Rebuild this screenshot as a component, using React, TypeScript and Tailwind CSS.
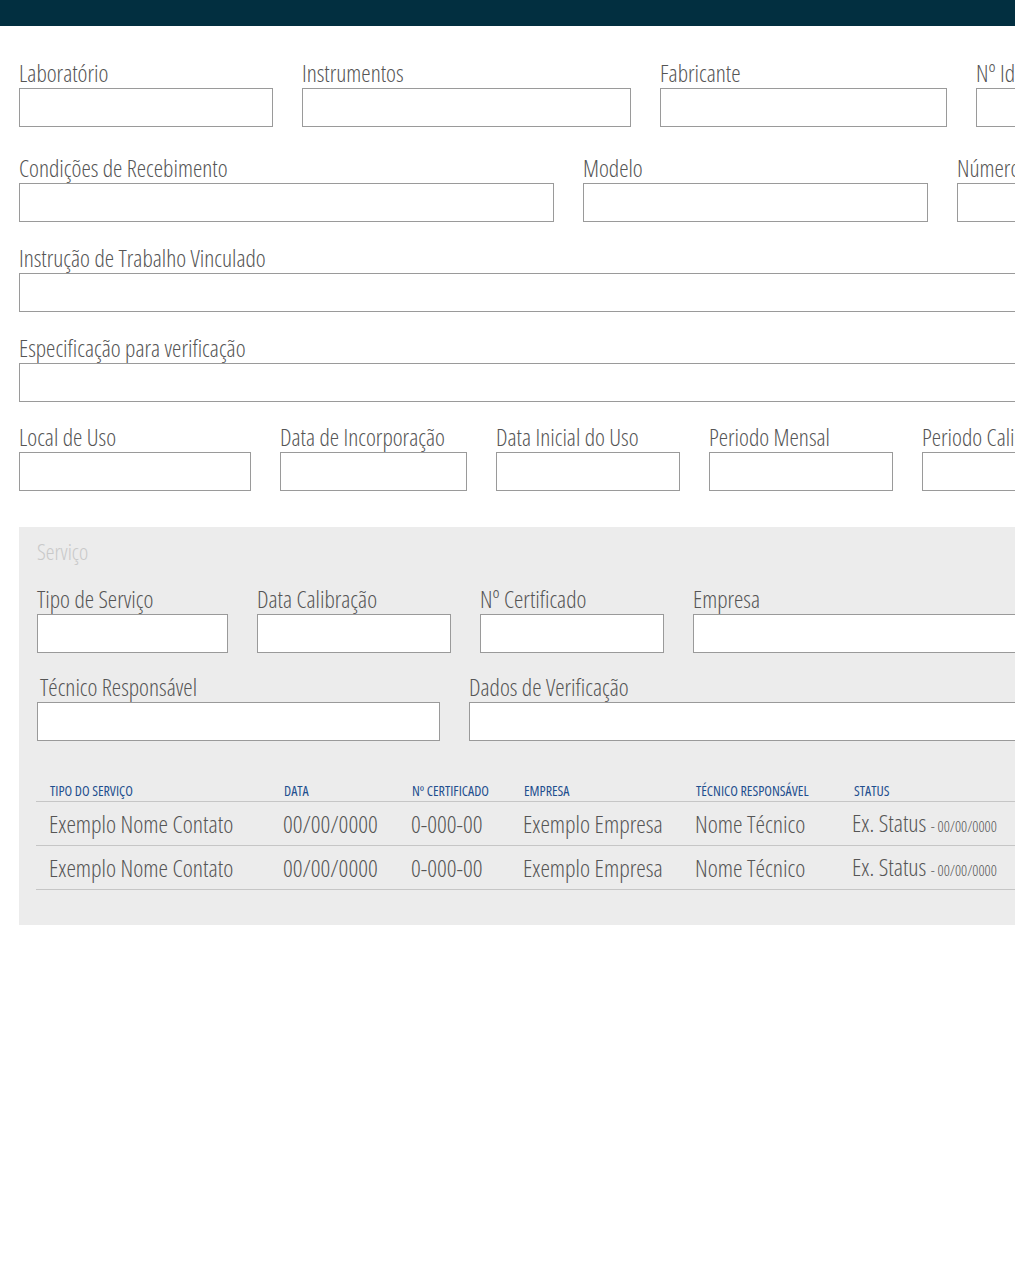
import React from 'react';

const font = "font-['Open_Sans','Liberation_Sans',sans-serif] font-light font-stretch-condensed";

function Field({ label, width, className = '' }: { label: string; width: string; className?: string }) {
  return (
    <div className={`flex flex-col ${width} ${className}`}>
      <label className="h-[28px] text-[23.6px] leading-[27px] text-[#555] whitespace-nowrap">{label}</label>
      <input className="h-[39px] w-full border border-[#9a9a9a] bg-white outline-none" />
    </div>
  );
}

const rows = [
  ['Exemplo Nome Contato', '00/00/0000', '0-000-00', 'Exemplo Empresa', 'Nome Técnico'],
  ['Exemplo Nome Contato', '00/00/0000', '0-000-00', 'Exemplo Empresa', 'Nome Técnico'],
];

export default function App() {
  return (
    <div className={`w-[1015px] h-[1264px] overflow-hidden bg-white ${font}`}>
      <div className="h-[26px] w-full bg-[#022f40]" />
      <div className="w-[1320px] pl-[19px] pt-[34px]">
        {/* Identificação */}
        <div className="flex gap-[29px]">
          <Field label="Laboratório" width="w-[254px]" />
          <Field label="Instrumentos" width="w-[329px]" />
          <Field label="Fabricante" width="w-[287px]" />
          <Field label="Nº Identificação" width="w-[260px]" />
        </div>
        <div className="mt-[28px] flex gap-[29px]">
          <Field label="Condições de Recebimento" width="w-[535px]" />
          <Field label="Modelo" width="w-[345px]" />
          <Field label="Número de Série" width="w-[300px]" />
        </div>
        <div className="mt-[23px] flex">
          <Field label="Instrução de Trabalho Vinculado" width="w-[1240px]" />
        </div>
        <div className="mt-[23px] flex">
          <Field label="Especificação para verificação" width="w-[1240px]" />
        </div>
        <div className="mt-[22px] flex gap-[29px]">
          <Field label="Local de Uso" width="w-[232px]" />
          <Field label="Data de Incorporação" width="w-[187px]" />
          <Field label="Data Inicial do Uso" width="w-[184px]" />
          <Field label="Periodo Mensal" width="w-[184px]" />
          <Field label="Periodo Calibração" width="w-[184px]" />
        </div>

        {/* Serviço */}
        <div className="mt-[36px] w-[1240px] bg-[#ececec] pl-[18px] pr-[18px] pt-[10px] pb-[35px]">
          <div className="h-[28px] text-[22px] leading-[28px] text-[#c9c9c9]">Serviço</div>
          <div className="mt-[21px] flex gap-[29px]">
            <Field label="Tipo de Serviço" width="w-[191px]" />
            <Field label="Data Calibração" width="w-[194px]" />
            <Field label="Nº Certificado" width="w-[184px]" />
            <Field label="Empresa" width="w-[500px]" />
          </div>
          <div className="mt-[21px] flex gap-[29px]">
            <Field label="Técnico Responsável" width="w-[403px]" className="[&>label]:pl-[3px]" />
            <Field label="Dados de Verificação" width="w-[700px]" />
          </div>

          <table className="mt-[35px] -ml-px w-full border-collapse text-left">
            <thead>
              <tr className="border-b border-[#c6c6c6]">
                {['Tipo do Serviço', 'Data', 'Nº Certificado', 'Empresa', 'Técnico Responsável', 'Status'].map((h, i) => (
                  <th
                    key={h}
                    className={`h-[25px] pl-[14px] pb-[2px] align-bottom text-[14px] font-normal uppercase leading-[16px] text-[#1f4f8f] ${
                      ['w-[234px]', 'w-[128px]', 'w-[112px]', 'w-[172px]', 'w-[158px]', ''][i]
                    }`}
                  >
                    {h}
                  </th>
                ))}
              </tr>
            </thead>
            <tbody>
              {rows.map((r, idx) => (
                <tr key={idx} className="h-[44px] border-b border-[#c6c6c6] text-[24px] text-[#555]">
                  {r.map((c, j) => (
                    <td key={j} className="pl-[13px] pt-[2px] leading-[28px] whitespace-nowrap">
                      {c}
                    </td>
                  ))}
                  <td className="pl-[12px] pt-[2px] leading-[28px] whitespace-nowrap">
                    Ex. Status <span className="text-[15px]">- 00/00/0000</span>
                  </td>
                </tr>
              ))}
            </tbody>
          </table>
        </div>
      </div>
    </div>
  );
}
